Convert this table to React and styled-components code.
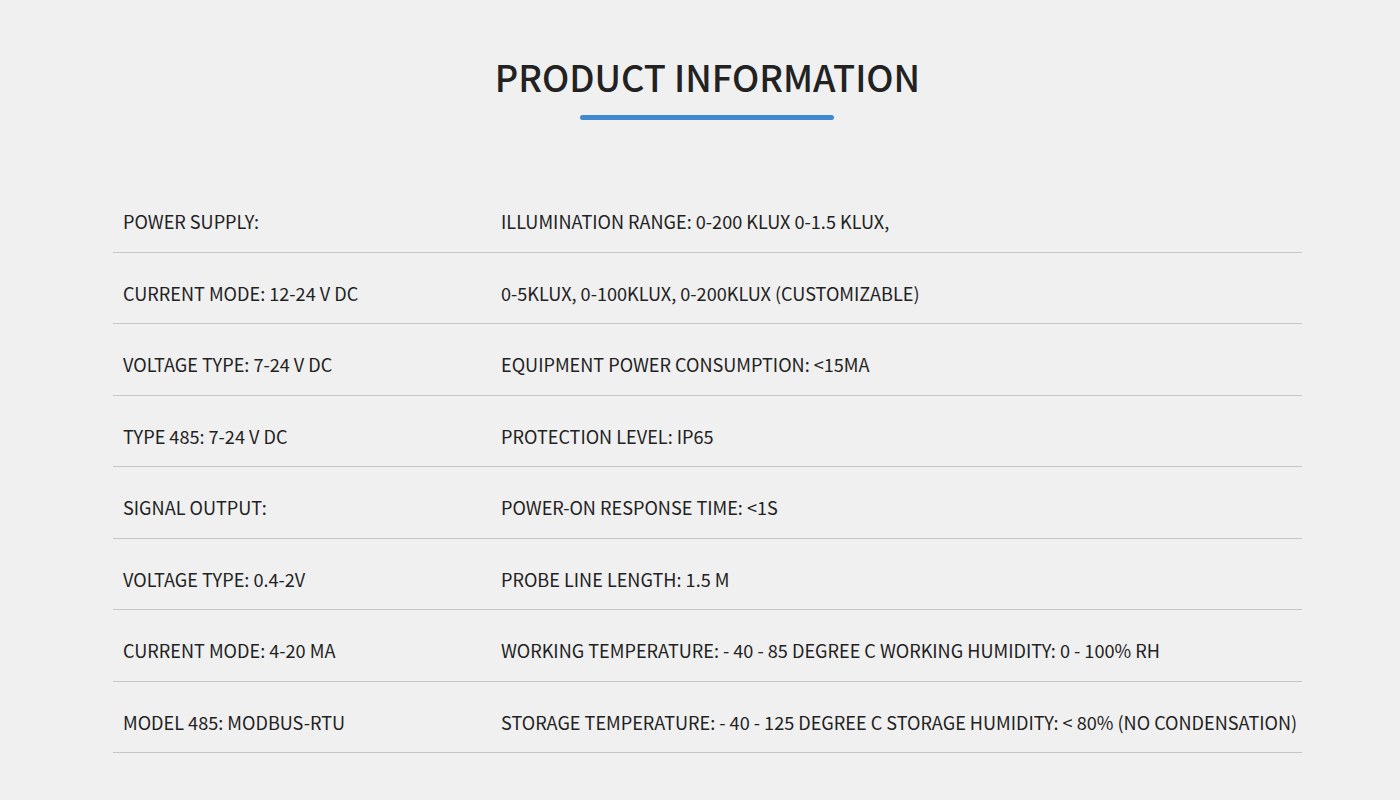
import React from 'react'
import styled, { createGlobalStyle } from 'styled-components'

const GlobalStyle = createGlobalStyle`
    html, body {
        margin: 0;
        padding: 0;
        background: #f0f0f0;
    }
    body {
        font-family: "Noto Sans CJK SC", "Noto Sans", sans-serif;
        color: #222;
    }
`

export const StyledPage = styled.div`
    width: 1400px;
    min-height: 800px;
    padding-left: 15px;
    box-sizing: border-box;
    display: flex;
    flex-direction: column;
    align-items: center;
`

export const StyledHeader = styled.div`
    display: flex;
    flex-direction: column;
    align-items: center;
    padding-top: 49px;
`

export const StyledTitle = styled.h2`
    margin: 0;
    font-size: 36.2px;
    font-weight: 500;
    line-height: 55px;
    color: #222;
`

export const StyledBar = styled.div`
    width: 254px;
    height: 5px;
    margin-top: 11px;
    border-radius: 3px;
    background: #4189d0;
`

export const StyledTable = styled.div`
    width: 1189px;
    margin-top: 61px;
`

export const StyledRow = styled.div`
    display: grid;
    grid-template-columns: 378px 1fr;
    height: 71.5px;
    align-items: center;
    border-bottom: 1px solid #c6c6c6;
    box-sizing: border-box;
`

export const StyledCell = styled.div`
    padding: 10px 0 0 10px;
    font-size: 18.1px;
    color: #222;
    white-space: nowrap;
`

const rows = [
    ['POWER SUPPLY:', 'ILLUMINATION RANGE: 0-200 KLUX 0-1.5 KLUX,'],
    ['CURRENT MODE: 12-24 V DC', '0-5KLUX, 0-100KLUX, 0-200KLUX (CUSTOMIZABLE)'],
    ['VOLTAGE TYPE: 7-24 V DC', 'EQUIPMENT POWER CONSUMPTION: <15MA'],
    ['TYPE 485: 7-24 V DC', 'PROTECTION LEVEL: IP65'],
    ['SIGNAL OUTPUT:', 'POWER-ON RESPONSE TIME: <1S'],
    ['VOLTAGE TYPE: 0.4-2V', 'PROBE LINE LENGTH: 1.5 M'],
    ['CURRENT MODE: 4-20 MA', 'WORKING TEMPERATURE: - 40 - 85 DEGREE C WORKING HUMIDITY: 0 - 100% RH'],
    ['MODEL 485: MODBUS-RTU', 'STORAGE TEMPERATURE: - 40 - 125 DEGREE C STORAGE HUMIDITY: < 80% (NO CONDENSATION)'],
]

const App = () => {
    return (
        <>
            <GlobalStyle />
            <StyledPage>
                <StyledHeader>
                    <StyledTitle>PRODUCT INFORMATION</StyledTitle>
                    <StyledBar />
                </StyledHeader>
                <StyledTable>
                    {rows.map(([left, right], i) => (
                        <StyledRow key={i}>
                            <StyledCell>{left}</StyledCell>
                            <StyledCell>{right}</StyledCell>
                        </StyledRow>
                    ))}
                </StyledTable>
            </StyledPage>
        </>
    )
}

export default App
